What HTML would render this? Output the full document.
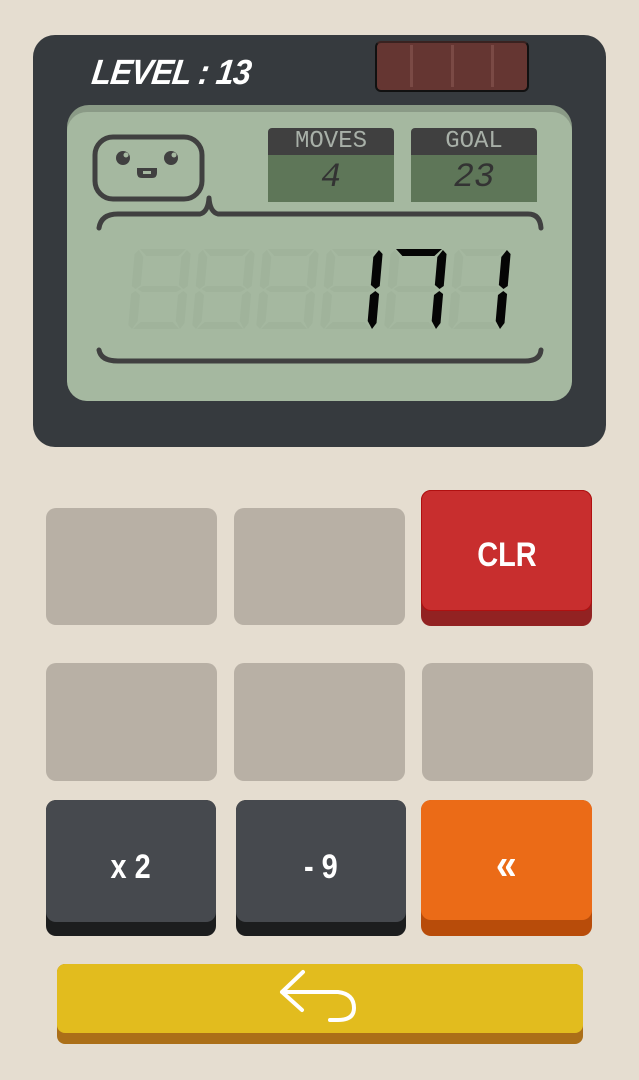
<!DOCTYPE html>
<html><head><style>
*{margin:0;padding:0;box-sizing:border-box}
body{width:639px;height:1080px;background:#e5ddd0;position:relative;overflow:hidden;font-family:"Liberation Sans",sans-serif}
.a{position:absolute}
.g{background:#b8b0a5;border-radius:10px}
.btn{color:#fff;font-family:"Liberation Sans",sans-serif;font-weight:bold;font-size:34px;display:flex;align-items:center;justify-content:center}
.btn span{display:inline-block;transform:scaleX(0.85)}
</style></head><body>
<div class="a" style="left:33px;top:35px;width:573px;height:412px;background:#363a3e;border-radius:22px"></div>
<div class="a" style="left:92px;top:53px;color:#fff;font-weight:bold;font-style:italic;font-size:35px;letter-spacing:-1px;transform:scaleX(0.92) skewX(-8deg);transform-origin:left">LEVEL : 13</div>
<div class="a" style="left:375px;top:41px;width:154px;height:51px;background:#653632;border:2px solid #111;border-radius:6px;border-top-color:#3a2220"></div>
<div class="a" style="left:410px;top:45px;width:3px;height:42px;background:#7a4a45"></div>
<div class="a" style="left:451px;top:45px;width:3px;height:42px;background:#7a4a45"></div>
<div class="a" style="left:491px;top:45px;width:3px;height:42px;background:#7a4a45"></div>
<div class="a" style="left:67px;top:105px;width:505px;height:296px;background:#8a9a86;border-radius:22px"></div>
<div class="a" style="left:67px;top:112px;width:505px;height:289px;background:#a5b8a0;border-radius:20px"></div>
<div class="a" style="left:268px;top:128px;width:126px;height:28px;background:#404040;border-radius:4px 4px 0 0;color:#a8b0a8;font-family:'Liberation Mono',monospace;font-size:24px;text-align:center;line-height:28px">MOVES</div>
<div class="a" style="left:268px;top:155px;width:126px;height:47px;background:#5e7658;color:#333;font-family:'Liberation Mono',monospace;font-size:34px;text-align:center;line-height:47px;font-style:italic">4</div>
<div class="a" style="left:411px;top:128px;width:126px;height:28px;background:#404040;border-radius:4px 4px 0 0;color:#a8b0a8;font-family:'Liberation Mono',monospace;font-size:24px;text-align:center;line-height:28px">GOAL</div>
<div class="a" style="left:411px;top:155px;width:126px;height:47px;background:#5e7658;color:#333;font-family:'Liberation Mono',monospace;font-size:34px;text-align:center;line-height:47px;font-style:italic">23</div>
<svg class="a" style="left:0;top:0" width="639" height="450">
<g fill="none" stroke="#404040" stroke-width="5" stroke-linecap="round" stroke-linejoin="round">
<rect x="95" y="137" width="107" height="62" rx="18"/>
<path d="M99 228 Q101 214 118 214 L200 214 Q208 212 209 198 Q210 212 218 214 L528 214 Q540 214 541 228"/>
<path d="M99 350 Q101 361 118 361 L525 361 Q540 361 541 350"/>
</g>
<circle cx="123" cy="158" r="7" fill="#404040"/><circle cx="126" cy="155" r="2.5" fill="#a5b8a0"/>
<circle cx="171" cy="158" r="7" fill="#404040"/><circle cx="174" cy="155" r="2.5" fill="#a5b8a0"/>
<path d="M137 168 H157 V173 Q157 178 152 178 H142 Q137 178 137 173Z" fill="#404040"/>
<rect x="143" y="171" width="8" height="3" fill="#a5b8a0"/>
</svg>
<svg class="a" style="left:0;top:0" width="639" height="450" id="segs"></svg>
<script>
(function(){
var s=document.getElementById('segs');var ns='http://www.w3.org/2000/svg';
var seg={a:"5,0 51,0 44,7 12,7",b:"52,1 56,5 56,37 52,40 47,36 47,8",c:"52,42 56,45 56,74 52,80 47,72 47,46",
d:"12,73 44,73 51,80 5,80",e:"4,42 9,46 9,72 4,80 0,76 0,45",f:"4,1 9,8 9,36 4,40 0,37 0,5",g:"6,40 11,37 45,37 50,40 45,43 11,43"};
var xs=[132,196,260,324,388,452];
var on={3:"bc",4:"abc",5:"bc"};
xs.forEach(function(x,i){
 for(var k in seg){
  var p=document.createElementNS(ns,'polygon');p.setAttribute('points',seg[k]);
  var lit=on[i]&&on[i].indexOf(k)>=0;
  p.setAttribute('fill',lit?'#050505':'#a0b39b');
  p.setAttribute('transform','translate('+(x+3)+',249) skewX(-5)');
  s.appendChild(p);
 }
});
})();
</script>
<div class="a g" style="left:46px;top:508px;width:171px;height:117px"></div>
<div class="a g" style="left:234px;top:508px;width:171px;height:117px"></div>
<div class="a" style="left:421px;top:490px;width:171px;height:136px;background:#922222;border-radius:10px"></div>
<div class="a btn" style="left:421px;top:490px;width:171px;height:121px;background:#c82e2e;border-radius:10px;border:1px solid #b01010;padding-top:10px"><span>CLR</span></div>
<div class="a g" style="left:46px;top:663px;width:171px;height:118px"></div>
<div class="a g" style="left:234px;top:663px;width:171px;height:118px"></div>
<div class="a g" style="left:422px;top:663px;width:171px;height:118px"></div>
<div class="a" style="left:46px;top:800px;width:170px;height:136px;background:#1c1d1e;border-radius:10px"></div>
<div class="a btn" style="left:46px;top:800px;width:170px;height:122px;background:#46494e;border-radius:10px;padding-top:12px"><span>x 2</span></div>
<div class="a" style="left:236px;top:800px;width:170px;height:136px;background:#1c1d1e;border-radius:10px"></div>
<div class="a btn" style="left:236px;top:800px;width:170px;height:122px;background:#46494e;border-radius:10px;padding-top:12px"><span>- 9</span></div>
<div class="a" style="left:421px;top:800px;width:171px;height:136px;background:#b84c0a;border-radius:10px"></div>
<div class="a btn" style="left:421px;top:800px;width:171px;height:120px;background:#eb6b17;border-radius:10px;font-size:44px;padding-top:10px"><span>«</span></div>
<div class="a" style="left:57px;top:964px;width:526px;height:80px;background:#ab6f18;border-radius:8px"></div>
<div class="a" style="left:57px;top:964px;width:526px;height:69px;background:#e2bc1e;border-radius:8px"></div>
<svg class="a" style="left:270px;top:968px" width="100" height="60"><path d="M33 4 L12 24 L32 42 M12 24 L68 24 Q84 26 84 40 Q84 52 68 52 L60 52" fill="none" stroke="#fff" stroke-width="4" stroke-linecap="round" stroke-linejoin="round"/></svg>
</body></html>
